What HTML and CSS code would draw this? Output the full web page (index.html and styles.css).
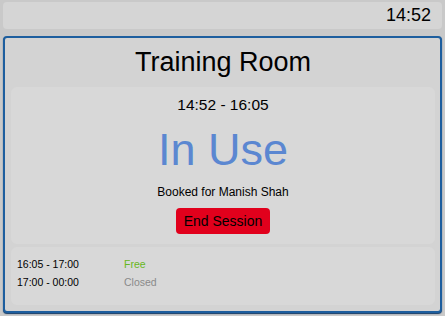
FILE: index.html
```html
<!DOCTYPE html>
<html lang="en">
<head>
    <meta charset="UTF-8">
    <title>Training Room</title>
    <link rel="stylesheet" href="styles.css">
</head>
<body>
    <!-- Barre du haut -->
    <div class="topbar">
        <span class="clock">14:52</span>
    </div>

    <!-- Panneau de la salle -->
    <div class="room">
        <h1 class="room-name">Training Room</h1>

        <div class="current">
            <div class="current-time">14:52 - 16:05</div>
            <div class="status">In Use</div>
            <div class="booked">Booked for Manish Shah</div>
            <button class="end-button">End Session</button>
        </div>

        <div class="upcoming">
            <div class="slot">
                <span class="slot-time">16:05 - 17:00</span>
                <span class="slot-state free">Free</span>
            </div>
            <div class="slot">
                <span class="slot-time">17:00 - 00:00</span>
                <span class="slot-state closed">Closed</span>
            </div>
        </div>
    </div>
</body>
</html>
```

FILE: styles.css
```css
/* Style général */
body, html {
    margin: 0;
    padding: 0;
    font-family: "Liberation Sans", Arial, sans-serif;
    background-color: #c9c9c9;
    color: #000;
    height: 100%;
}

body {
    display: flex;
    flex-direction: column;
    padding: 2px 3px 3px 3px;
    box-sizing: border-box;
    gap: 7px;
}

/* Barre du haut */
.topbar {
    height: 27px;
    background-color: #d5d5d5;
    border-radius: 4px;
    display: flex;
    align-items: center;
    justify-content: flex-end;
    padding-right: 11px;
}

.clock {
    font-size: 18px;
}

/* Panneau de la salle */
.room {
    flex: 1;
    background-color: #d3d3d3;
    border: 2px solid #1d5e9e;
    border-radius: 4px;
    box-shadow: 0 1px 1px #123a66;
    display: flex;
    flex-direction: column;
    padding: 0 5px 6px 6px;
}

.room-name {
    margin: 0;
    font-weight: normal;
    font-size: 27px;
    text-align: center;
    height: 49px;
    line-height: 48px;
}

.current {
    background-color: #d8d8d8;
    border-radius: 6px;
    display: flex;
    flex-direction: column;
    align-items: center;
    padding-top: 7px;
    height: 157px;
    box-sizing: border-box;
}

.current-time {
    font-size: 15.5px;
    line-height: 22px;
}

.status {
    color: #5b87d1;
    font-size: 45px;
    line-height: 50px;
    margin-top: 9px;
}

.booked {
    font-size: 12px;
    line-height: 16px;
    margin-top: 9px;
}

.end-button {
    margin-top: 8px;
    background-color: #e1001c;
    color: #000;
    border: none;
    border-radius: 4px;
    font-family: inherit;
    font-size: 14px;
    width: 94px;
    height: 26px;
    padding: 0;
}

.upcoming {
    margin-top: 3px;
    background-color: #d8d8d8;
    border-radius: 6px;
    padding: 8px 0 0 6px;
    height: 58px;
    box-sizing: border-box;
}

.slot {
    display: flex;
    font-size: 10.5px;
    line-height: 18px;
}

.slot-time {
    width: 107px;
}

.free {
    color: #66b722;
}

.closed {
    color: #8a8a8a;
}
```
